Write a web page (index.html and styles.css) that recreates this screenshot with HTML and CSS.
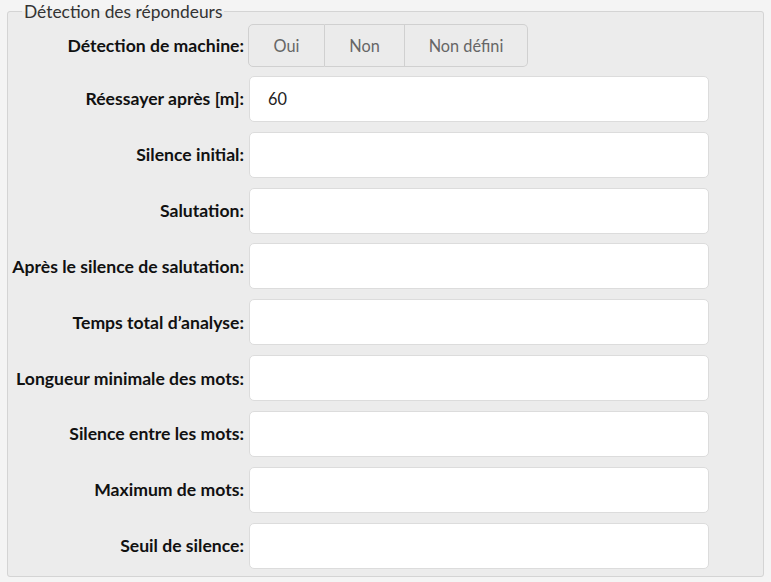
FILE: index.html
```html
<!DOCTYPE html>
<html lang="fr">
<head>
  <meta charset="UTF-8" />
  <meta name="viewport" content="width=device-width, initial-scale=1.0"/>
  <title>Détection des répondeurs</title>
  <link rel="stylesheet" href="styles.css">
</head>
<body>
  <fieldset class="amd">
    <legend>Détection des répondeurs</legend>

    <div class="form-grid">
      <label>Détection de machine:</label>
      <div class="btn-group">
        <button class="opt opt-oui">Oui</button>
        <button class="opt opt-non">Non</button>
        <button class="opt opt-nd">Non défini</button>
      </div>

      <label for="retry">Réessayer après [m]:</label>
      <input type="text" id="retry" value="60" />

      <label for="initial">Silence initial:</label>
      <input type="text" id="initial" />

      <label for="greeting">Salutation:</label>
      <input type="text" id="greeting" />

      <label for="after">Après le silence de salutation:</label>
      <input type="text" id="after" />

      <label for="total">Temps total d’analyse:</label>
      <input type="text" id="total" />

      <label for="minword">Longueur minimale des mots:</label>
      <input type="text" id="minword" />

      <label for="between">Silence entre les mots:</label>
      <input type="text" id="between" />

      <label for="maxwords">Maximum de mots:</label>
      <input type="text" id="maxwords" />

      <label for="threshold">Seuil de silence:</label>
      <input type="text" id="threshold" />
    </div>
  </fieldset>
</body>
</html>
```

FILE: styles.css
```css
body {
  font-family: Lato, 'Liberation Sans', sans-serif;
  background-color: #f4f4f4;
  color: #111;
  margin: 0;
  padding: 2px 6px 0 7px;
}

.amd {
  margin: 0;
  width: 757px;
  box-sizing: border-box;
  background: #ececec;
  border: 1px solid #d4d4d4;
  border-radius: 3px;
  padding: 3px 0 7px 0;
}

.amd legend {
  font-size: 17.4px;
  color: #333;
  padding: 0 2px;
  margin-left: 14px;
  line-height: 19px;
}

.form-grid {
  display: grid;
  grid-template-columns: 236px 460px;
  column-gap: 5px;
  row-gap: 9.85px;
  align-items: center;
}

.form-grid label {
  text-align: right;
  font-weight: bold;
  font-size: 17.6px;
  white-space: nowrap;
}

.form-grid input {
  height: 46px;
  box-sizing: border-box;
  border: 1px solid #dcdcdc;
  border-radius: 5px;
  background: #fff;
  padding: 0 18px;
  font-family: inherit;
  font-size: 16.3px;
  color: #222;
  outline: none;
}

.btn-group {
  display: flex;
  width: 280px;
  height: 43px;
  margin-left: -1px;
  margin-bottom: -1px;
}

.opt {
  background: #ebebeb;
  border: 1px solid #d0d0d0;
  border-left: none;
  font-family: inherit;
  font-size: 16.3px;
  color: #666;
  padding: 0;
  cursor: pointer;
}

.opt-oui {
  width: 77px;
  border-left: 1px solid #d0d0d0;
  border-radius: 5px 0 0 5px;
}

.opt-non {
  width: 80px;
}

.opt-nd {
  width: 123px;
  border-radius: 0 5px 5px 0;
}
```
